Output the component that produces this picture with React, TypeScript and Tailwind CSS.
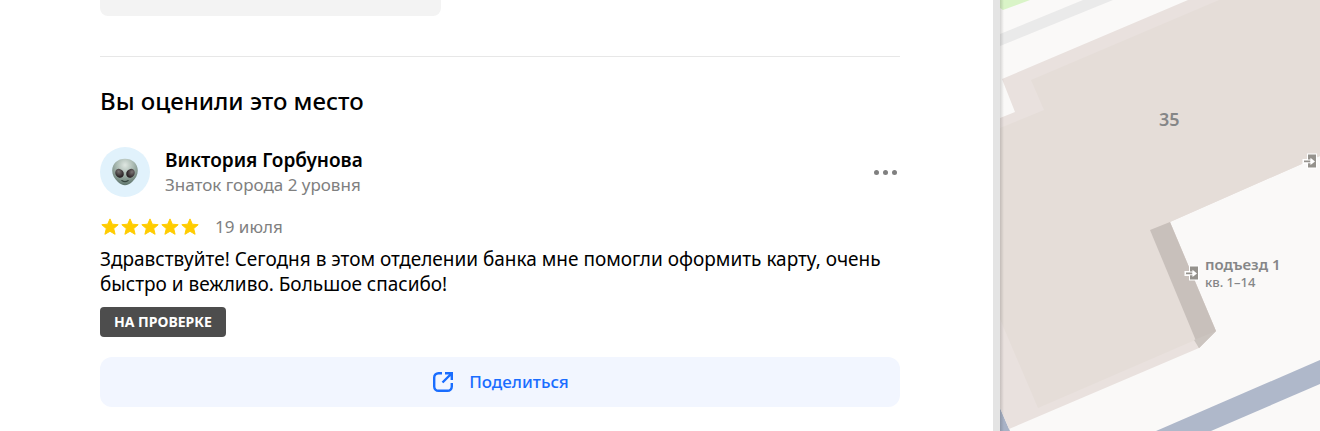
const review = {
  author: "Виктория Горбунова",
  level: "Знаток города 2 уровня",
  date: "19 июля",
  rating: 5,
  text: "Здравствуйте! Сегодня в этом отделении банка мне помогли оформить карту, очень быстро и вежливо. Большое спасибо!",
  status: "НА ПРОВЕРКЕ",
};

function AlienFace() {
  return (
    <svg viewBox="0 0 26 28" className="h-7 w-[26px]" aria-hidden="true">
      <defs>
        <radialGradient id="alien-skin" cx="50%" cy="24%" r="75%">
          <stop offset="0" stopColor="#dfe7e2" />
          <stop offset="0.45" stopColor="#a9b9b1" />
          <stop offset="1" stopColor="#5f756c" />
        </radialGradient>
        <radialGradient id="alien-eye" cx="55%" cy="30%" r="65%">
          <stop offset="0" stopColor="#7b7474" />
          <stop offset="1" stopColor="#241d20" />
        </radialGradient>
      </defs>
      <path
        d="M13 .7C5.600.7.2 5.600.2 12.500c0 4.500 2.300 8.300 5.500 11.200 2.300 2.100 4.800 3.600 7.300 3.600s5-1.500 7.300-3.600c3.200-2.900 5.500-6.700 5.500-11.200C25.800 5.600 20.400.7 13 .7Z"
        fill="url(#alien-skin)"
      />
      <ellipse cx="7.500" cy="15.300" rx="4" ry="4.700" transform="rotate(-38 7.500 15.300)" fill="url(#alien-eye)" />
      <ellipse cx="18.500" cy="15.300" rx="4" ry="4.700" transform="rotate(38 18.500 15.300)" fill="url(#alien-eye)" />
      <path d="M9.800 22.600q3.200 2.200 6.400 0" fill="none" stroke="#34443d" strokeWidth="1.200" strokeLinecap="round" />
    </svg>
  );
}

function Star() {
  return (
    <svg viewBox="0 0 20 20" className="size-5" fill="#ffcc00" aria-hidden="true">
      <path
        d="M10 1.900l2.300 5.300 5.900.5-4.500 3.900 1.400 5.700L10 14.300l-5.100 3 1.400-5.700L1.800 7.700l5.900-.5z"
        stroke="#ffcc00"
        strokeWidth="1"
        strokeLinejoin="round"
      />
    </svg>
  );
}

function ShareIcon() {
  return (
    <svg
      viewBox="0 0 24 24"
      className="size-6"
      fill="none"
      stroke="currentColor"
      strokeWidth="2.400"
      aria-hidden="true"
    >
      <path d="M11 3.200H7.500a4.300 4.300 0 0 0-4.300 4.300v9a4.300 4.300 0 0 0 4.300 4.300h9a4.300 4.300 0 0 0 4.300-4.300V13" />
      <path d="M14 3.200h6.800V10M20.500 3.500 11.500 12.500" />
    </svg>
  );
}

function EntranceIcon() {
  return (
    <svg viewBox="0 0 16 16" className="size-4" aria-hidden="true">
      <path d="M5 .5h10v15H5V11H.5V6H5z" fill="#fff" />
      <path d="M6 1.500h8v13H6z" fill="#95928d" />
      <path d="M1.500 7h7.500v2.800H1.500z" fill="#95928d" stroke="#fff" strokeWidth="1" />
      <path d="M8.500 4.800 13 8.400 8.500 12z" fill="#fff" />
    </svg>
  );
}

function MapPane() {
  return (
    <aside aria-label="Карта" className="relative w-[320px] shrink-0 overflow-hidden bg-[#faf9f8]">
      <svg viewBox="0 0 320 431" className="block w-full" aria-hidden="true">
        <path d="M0 0h30L3 10 0 8z" fill="#d9f4c7" />
        <path d="M0 34 83 0h30L0 46z" fill="#eaeaea" />
        <path d="M0 408 10 431H0z" fill="#a8b2c6" />
        <path d="M156 431 320 360v24L211 431z" fill="#afb8ca" />
        <path d="M188 0 2 79l13 33-15 6v290l9 21 190-81 17-17-46-109 150-66V0z" fill="#e9e1de" />
        <path d="M219 0 31 80l13 30-44 18v191l38 89 178-77-46-109 150-66V0z" fill="#e5ddd8" />
        <path d="M150 230 170 222l46 109-17 17z" fill="#c8c0bb" />
        <path d="M194 340 216 331l-17 17z" fill="#cbc4bf" />
      </svg>
      <div className="absolute inset-y-0 left-0 w-1 bg-linear-to-r from-black/15 to-transparent" />
      <span className="absolute top-[107px] left-[159px] text-lg leading-6 font-semibold text-[#858687]">35</span>
      <div className="absolute top-[153px] left-[302px]">
        <EntranceIcon />
      </div>
      <div className="absolute top-[256px] left-[184px] flex gap-[5px] text-[#858687]">
        <div className="pt-[9px]">
          <EntranceIcon />
        </div>
        <div>
          <p className="text-[15px] leading-[17px] font-semibold">подъезд 1</p>
          <p className="text-[13px] leading-[18px] font-medium">кв. 1–14</p>
        </div>
      </div>
    </aside>
  );
}

export default function App() {
  return (
    <div className="flex min-h-screen bg-white font-['Noto_Sans','Open_Sans',sans-serif] text-black">
      <main className="min-w-0 flex-1 pr-[93px] pl-[100px]">
        <div className="h-4 w-[341px] rounded-b-lg bg-[#f3f3f3]" />

        <section className="mt-10 border-t border-[#e7e7e7] pt-7 pb-6">
          <h2 className="text-2xl leading-8 font-medium">Вы оценили это место</h2>

          <div className="mt-[30px] flex items-center">
            <div className="flex size-[50px] shrink-0 items-center justify-center rounded-full bg-[#e1f2fc]">
              <AlienFace />
            </div>
            <div className="ml-[15px] flex-1">
              <p className="text-[19px] leading-[26px] font-semibold">{review.author}</p>
              <p className="text-[17px] leading-6 text-[#808080]">{review.level}</p>
            </div>
            <button type="button" aria-label="Ещё" className="flex size-[30px] items-center justify-center gap-1">
              <span className="size-[5px] rounded-full bg-[#808080]" />
              <span className="size-[5px] rounded-full bg-[#808080]" />
              <span className="size-[5px] rounded-full bg-[#808080]" />
            </button>
          </div>

          <div className="mt-[17px] flex items-center">
            <div className="flex" role="img" aria-label="Оценка 5 из 5">
              {Array.from({ length: review.rating }, (_, index) => (
                <Star key={index} />
              ))}
            </div>
            <time className="ml-[15px] text-[17px] leading-[25px] text-[#808080]">{review.date}</time>
          </div>

          <p className="mt-2 text-[19px] leading-[25px]">{review.text}</p>

          <span className="mt-[10px] flex h-[30px] w-fit items-center rounded bg-[#4d4d4d] px-[14px] text-sm font-bold text-white">
            {review.status}
          </span>

          <button
            type="button"
            className="mt-5 flex h-[50px] w-full items-center justify-center gap-[14px] rounded-xl bg-[#f2f6ff] text-[17px] font-medium text-[#196dff]"
          >
            <ShareIcon />
            Поделиться
          </button>
        </section>
      </main>

      <div className="w-[7px] shrink-0 bg-[#e4e4e4]" />
      <MapPane />
    </div>
  );
}
